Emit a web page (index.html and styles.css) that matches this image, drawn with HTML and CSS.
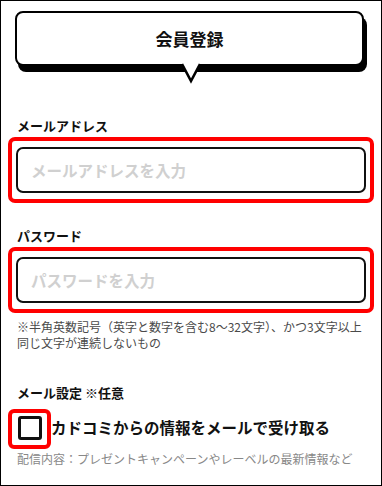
FILE: index.html
```html
<!DOCTYPE html>
<html>
  <head>
    <title>会員登録</title>
    <link rel="stylesheet" href="styles.css">
  </head>
  <body>
    <div class="bubble">
      <h1>会員登録</h1>
      <svg class="tail" width="22" height="22" viewBox="0 0 22 22">
        <polygon points="1,0 21,0 11,20" fill="#fff" />
        <polyline points="2,2 11,19 20,2" fill="none" stroke="#000" stroke-width="2.6" />
      </svg>
    </div>

    <div class="form">
      <label class="field-label">メールアドレス</label>
      <div class="highlight">
        <input class="text-input" type="email" placeholder="メールアドレスを入力" />
      </div>

      <label class="field-label second">パスワード</label>
      <div class="highlight">
        <input class="text-input" type="password" placeholder="パスワードを入力" />
      </div>
      <p class="note">※半角英数記号（英字と数字を含む8〜32文字）、かつ3文字以上<br />同じ文字が連続しないもの</p>

      <label class="field-label mail">メール設定 ※任意</label>
      <div class="check-row">
        <span class="check-highlight">
          <input class="check" type="checkbox" />
        </span>
        <span class="check-text">カドコミからの情報をメールで受け取る</span>
      </div>
      <p class="sub-note">配信内容：プレゼントキャンペーンやレーベルの最新情報など</p>
    </div>
  </body>
</html>
```

FILE: styles.css
```css
html,
body {
  margin: 0;
  padding: 0;
}

body {
  width: 382px;
  height: 486px;
  box-sizing: border-box;
  border: 1px solid #000;
  overflow: hidden;
  background: #fff;
  color: #111;
  font-family: 'Noto Sans CJK JP', 'Noto Sans', sans-serif;
}

.bubble {
  position: relative;
  margin: 10px 17px 0 14px;
  height: 55px;
  box-sizing: border-box;
  border: 2px solid #000;
  border-radius: 8px;
  box-shadow: 3px 6px 0 #000;
  display: flex;
  align-items: center;
  justify-content: center;
  background: #fff;
}

.bubble h1 {
  margin: 0;
  font-size: 17px;
  font-weight: 700;
  line-height: 1;
}

.tail {
  position: absolute;
  left: 163px;
  top: 49px;
}

.form {
  padding: 0 7px;
}

.field-label {
  display: block;
  margin: 51px 0 2px;
  padding-left: 9px;
  font-size: 13px;
  font-weight: 700;
  line-height: 18px;
}

.field-label.second {
  margin-top: 24px;
}

.field-label.mail {
  margin-top: 33px;
}

.highlight {
  border: 4px solid #f00;
  border-radius: 7px;
  padding: 6px 4px;
}

.text-input {
  display: block;
  width: 100%;
  height: 46px;
  box-sizing: border-box;
  border: 2px solid #111;
  border-radius: 7px;
  padding: 0 13px;
  font-family: inherit;
  font-size: 15.5px;
  font-weight: 700;
  outline: none;
}

.text-input::placeholder {
  color: #d0d0d0;
}

.note {
  margin: 6px 0 0;
  padding-left: 9px;
  font-size: 12px;
  line-height: 16px;
  color: #4a4a4a;
}

.check-row {
  display: flex;
  align-items: center;
  margin-top: 7px;
}

.check-highlight {
  display: flex;
  align-items: center;
  justify-content: center;
  width: 43px;
  height: 40px;
  box-sizing: border-box;
  border: 4px solid #f00;
  border-radius: 6px;
}

.check {
  appearance: none;
  -webkit-appearance: none;
  margin: 0 0 2px;
  width: 24px;
  height: 24px;
  box-sizing: border-box;
  border: 3px solid #111;
  border-radius: 3px;
  background: #fff;
}

.check-text {
  font-size: 15.5px;
  font-weight: 700;
  line-height: 20px;
  margin-bottom: 4px;
}

.sub-note {
  margin: 2px 0 0;
  padding-left: 9px;
  font-size: 12px;
  line-height: 16px;
  color: #888;
}
```
